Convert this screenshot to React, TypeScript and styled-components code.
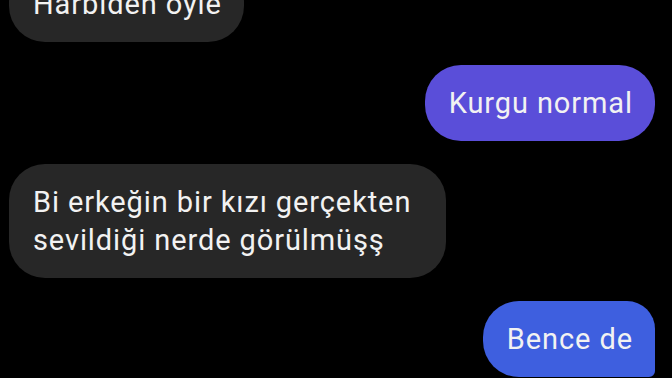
import React from 'react';
import styled, { createGlobalStyle } from 'styled-components';

type Side = 'in' | 'out';

type Message = {
  id: number;
  side: Side;
  text: string;
  color?: string;
  tail?: boolean;
};

const messages: Message[] = [
  { id: 1, side: 'in', text: 'Harbiden öyle' },
  { id: 2, side: 'out', text: 'Kurgu normal', color: '#5a4ed9' },
  {
    id: 3,
    side: 'in',
    text: 'Bi erkeğin bir kızı gerçekten sevildiği nerde görülmüşş',
  },
  { id: 4, side: 'out', text: 'Bence de', color: '#3e5fdf', tail: true },
];

const GlobalStyle = createGlobalStyle`
  html, body {
    margin: 0;
    padding: 0;
    background: #000000;
  }

  body {
    font-family: Roboto, 'Noto Sans', 'Liberation Sans', sans-serif;
    -webkit-font-smoothing: antialiased;
  }
`;

const App = () => {
  return (
    <>
      <GlobalStyle />
      <Screen>
        <Thread>
          {messages.map(({ id, side, text, color, tail }) => (
            <Bubble key={id} $side={side} $color={color} $tail={tail}>
              {text}
            </Bubble>
          ))}
        </Thread>
      </Screen>
    </>
  );
};

export default App;

const Screen = styled.div`
  width: 672px;
  height: 378px;
  overflow: hidden;
  background: #000000;
`;

const Thread = styled.div`
  display: flex;
  flex-direction: column;
  gap: 23px;
  margin-top: -34px;
  padding: 0 17px 0 9px;
`;

const Bubble = styled.div<{ $side: Side; $color?: string; $tail?: boolean }>`
  align-self: ${({ $side }) => ($side === 'out' ? 'flex-end' : 'flex-start')};
  max-width: 437px;
  box-sizing: border-box;
  padding: 19px 22px 19px 24px;
  border-radius: ${({ $tail }) => ($tail ? '36px 28px 6px 36px' : '36px')};
  background: ${({ $side, $color }) =>
    $side === 'out' ? $color ?? '#5a4ed9' : '#272727'};
  color: #f2f2f2;
  font-size: 29px;
  line-height: 38px;
  font-weight: 400;
  letter-spacing: 0.9px;
`;
